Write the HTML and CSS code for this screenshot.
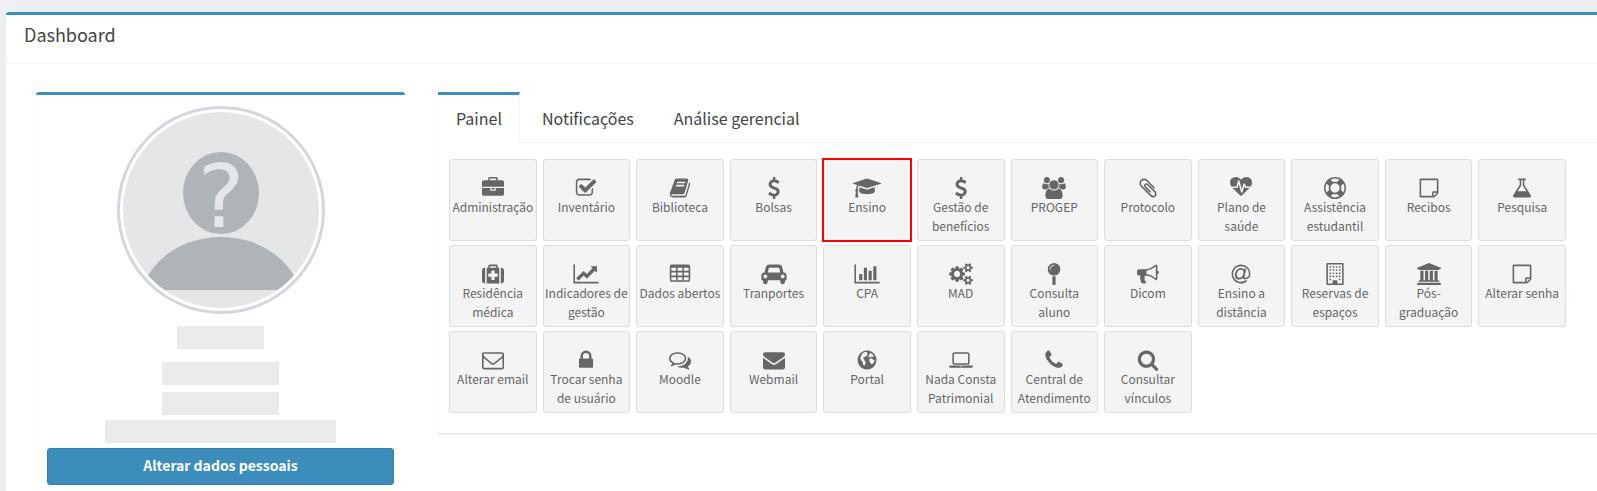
FILE: index.html
```html
<!DOCTYPE html>
<html lang="pt-BR">
<head>
    <meta charset="UTF-8">
    <meta name="viewport" content="width=device-width, initial-scale=1.0">
    <title>Dashboard</title>
    <link rel="stylesheet" href="styles.css">
</head>
<body>
    <!-- Ícones -->
    <svg class="sprite" aria-hidden="true">
        <symbol id="briefcase" viewBox="0 0 1792 1792"><path d="M640 256h512v-128h-512v128zm1152 640v480q0 66-47 113t-113 47h-1472q-66 0-113-47t-47-113v-480h672v160q0 26 19 45t45 19h320q26 0 45-19t19-45v-160h672zm-768 0v128h-256v-128h256zm768-480v384h-1792v-384q0-66 47-113t113-47h352v-160q0-40 28-68t68-28h576q40 0 68 28t28 68v160h352q66 0 113 47t47 113z"/></symbol>
        <symbol id="check" viewBox="0 0 1792 1792"><path d="M1472 930v318q0 119-84.500 203.500t-203.500 84.500h-832q-119 0-203.500-84.500t-84.500-203.500v-832q0-119 84.500-203.500t203.500-84.500h832q63 0 117 25 15 7 18 23 3 17-9 29l-49 49q-10 10-23 10-3 0-9-2-23-6-45-6h-832q-66 0-113 47t-47 113v832q0 66 47 113t113 47h832q66 0 113-47t47-113v-254q0-13 9-22l64-64q10-10 23-10 6 0 12 3 20 8 20 29zm231-489l-814 814q-24 24-57 24t-57-24l-430-430q-24-24-24-57t24-57l110-110q24-24 57-24t57 24l263 263 647-647q24-24 57-24t57 24l110 110q24 24 24 57t-24 57z"/></symbol>
        <symbol id="book" viewBox="0 0 1792 1792"><path d="M1703 478q40 57 18 129l-275 906q-19 64-76.500 107.500t-122.500 43.500h-923q-77 0-148.500-53.500t-99.500-131.500q-24-67-2-127 0-4 3-27t4-37q1-8-3-21.500t-3-19.500q2-11 8-21t16.500-23.500 16.500-23.500q23-38 45-91.500t30-91.500q3-10 .5-30t-.5-28q3-11 17-28t17-23q21-36 42-92t25-90q1-9-2.500-32t.5-28q4-13 22-30.500t22-22.500q19-26 42.500-84.500t27.500-96.500q1-8-3-25.500t-2-26.500q2-8 9-18t18-23 17-21q8-12 16.500-30.500t15-35 16-36 19.500-32 26.500-23.500 36-11.500 47.500 5.500l-1 3q38-9 51-9h761q74 0 114 56t18 130l-274 906q-36 119-71.500 153.500t-128.500 34.500h-869q-27 0-38 15-11 16-1 43 24 70 144 70h923q29 0 56-15.500t35-41.500l300-987q7-22 5-57 38 15 59 43zm-1064 2q-4 13 2 22.500t20 9.500h608q13 0 25.500-9.500t16.500-22.500l21-64q4-13-2-22.500t-20-9.500h-608q-13 0-25.500 9.500t-16.500 22.500zm-83 256q-4 13 2 22.500t20 9.500h608q13 0 25.500-9.500t16.500-22.500l21-64q4-13-2-22.500t-20-9.500h-608q-13 0-25.500 9.500t-16.500 22.500z"/></symbol>
        <symbol id="dollar" viewBox="0 0 1792 1792"><path d="M1362 1185q0 153-99.500 263.500t-258.500 136.500v175q0 14-9 23t-23 9h-135q-13 0-22.500-9.500t-9.500-22.500v-175q-66-9-127.500-31t-101.500-44.500-74-48-46.500-37.500-17.500-18q-17-21-2-41l103-135q7-10 23-12 15-2 24 9l2 2q113 99 243 125 37 8 74 8 81 0 142.500-43t61.500-122q0-28-15-53t-33.500-42-58.500-37.500-66-32-80-32.500q-39-16-61.500-25t-61.500-26.500-62.500-31-56.500-35.500-53.500-42.500-43.500-49-35.500-58-21-66.500-8.500-78q0-138 98-242t255-134v-180q0-13 9.500-22.500t22.500-9.500h135q14 0 23 9t9 23v176q57 6 110.500 23t87 33.500 63.500 37.500 39 29 15 14q17 18 5 38l-81 146q-8 15-23 16-14 3-27-7-3-3-14.500-12t-39-26.500-58.500-32-74.500-26-85.500-11.500q-95 0-155 43t-60 111q0 26 8.500 48t29.500 41.500 39.500 33 56 31 60.500 27 70 27.500q53 20 81 31.500t76 35 75.500 42.500 62 50 53 63.500 31.500 76.500 13 94z"/></symbol>
        <symbol id="graduation" viewBox="0 0 2304 1792"><path d="M1774 836l18 316q4 69-82 128t-235 93.500-323 34.500-323-34.500-235-93.500-82-128l18-316 574 181q22 7 48 7t48-7zm530-324q0 23-22 31l-1120 352q-4 1-10 1t-10-1l-652-206q-43 34-71 111.500t-34 178.500q63 36 63 109 0 69-58 107l58 433q2 14-8 25-9 11-24 11h-192q-15 0-24-11-10-11-8-25l58-433q-58-38-58-107 0-73 65-111 11-207 98-330l-333-104q-22-8-22-31t22-31l1120-352q4-1 10-1t10 1l1120 352q22 8 22 31z"/></symbol>
        <symbol id="users" viewBox="0 0 1920 1792"><path d="M593 896q-162 5-265 128h-134q-82 0-138-40.500t-56-118.500q0-353 124-353 6 0 43.500 21t97.500 42.500 119 21.500q67 0 133-23-5 37-5 66 0 139 81 256zm1071 637q0 120-73 189.500t-194 69.500h-874q-121 0-194-69.500t-73-189.500q0-53 3.500-103.500t14-109 26.500-108.500 43-97.500 62-81 85.500-53.500 111.500-20q10 0 43 21.500t73 48 107 48 135 21.500 135-21.500 107-48 73-48 43-21.500q61 0 111.500 20t85.500 53.500 62 81 43 97.500 26.500 108.500 14 109 3.500 103.500zm-1024-1277q0 106-75 181t-181 75-181-75-75-181 75-181 181-75 181 75 75 181zm704 384q0 159-112.500 271.500t-271.500 112.500-271.500-112.500-112.500-271.500 112.500-271.500 271.500-112.500 271.500 112.500 112.500 271.500zm576 225q0 78-56 118.500t-138 40.500h-134q-103-123-265-128 81-117 81-256 0-29-5-66 66 23 133 23 59 0 119-21.500t97.500-42.500 43.500-21q124 0 124 353zm-128-609q0 106-75 181t-181 75-181-75-75-181 75-181 181-75 181 75 75 181z"/></symbol>
        <symbol id="paperclip" viewBox="0 0 1792 1792"><path d="M1596 1385q0 117-79 196t-196 79q-135 0-235-100l-777-776q-113-115-113-271 0-159 110-270t269-111q158 0 273 113l605 606q10 10 10 22 0 16-30.500 46.500t-46.500 30.500q-13 0-23-10l-606-607q-79-77-181-77-106 0-179 75t-73 181q0 105 76 181l776 777q63 63 145 63 64 0 106-42t42-106q0-82-63-145l-581-581q-26-24-60-24-29 0-48 19t-19 48q0 32 25 59l410 410q10 10 10 22 0 16-31 47t-47 31q-12 0-22-10l-410-410q-63-61-63-149 0-82 57-139t139-57q88 0 149 63l581 581q100 98 100 235z"/></symbol>
        <symbol id="heartbeat" viewBox="0 0 1792 1792"><path d="M1280 896h305q-5 6-10 10.500t-9 7.500l-3 4-623 600q-18 18-44 18t-44-18l-624-602q-5-2-21-20h369q22 0 39.500-13.500t22.500-34.500l70-281 190 667q6 20 23 33t39 13q21 0 38-13t23-33l146-485 56 112q18 35 57 35zm512-428q0 145-103 300h-369l-111-221q-8-17-25.500-27t-36.500-8q-45 5-56 46l-129 430-196-686q-6-20-23.500-33t-39.500-13-39 13.500-22 34.500l-116 464h-423q-103-155-103-300 0-220 127-344t351-124q62 0 126.500 21.500t120 58 95.500 68.500 76 68q36-36 76-68t95.500-68.500 120-58 126.500-21.500q224 0 351 124t127 344z"/></symbol>
        <symbol id="life-ring" viewBox="0 0 1792 1792"><path fill-rule="evenodd" d="M896 0q182 0 348 71t286 191 191 286 71 348-71 348-191 286-286 191-348 71-348-71-286-191-191-286-71-348 71-348 191-286 286-191 348-71zm0 128q-190 0-361 90l194 194q82-28 167-28t167 28l194-194q-171-90-361-90zm-678 1129l194-194q-28-82-28-167t28-167l-194-194q-90 171-90 361t90 361zm678 407q190 0 361-90l-194-194q-82 28-167 28t-167-28l-194 194q171 90 361 90zm0-384q159 0 271.500-112.500t112.500-271.500-112.500-271.500-271.500-112.500-271.500 112.500-112.500 271.500 112.500 271.500 271.500 112.500zm484-217l194 194q90-171 90-361t-90-361l-194 194q28 82 28 167t-28 167z"/></symbol>
        <symbol id="sticky-note" viewBox="0 0 1536 1792"><path d="M1400 1280h-248v248q29-10 41-22l185-185q12-12 22-41zm-280-128h288v-896h-1280v1280h896v-288q0-40 28-68t68-28zm416-928v1024q0 40-20 88t-48 76l-184 184q-28 28-76 48t-88 20h-1024q-40 0-68-28t-28-68v-1344q0-40 28-68t68-28h1344q40 0 68 28t28 68z"/></symbol>
        <symbol id="flask" viewBox="0 0 1792 1792"><path d="M1591 1448q56 89 21.500 152.500t-140.500 63.500h-1152q-106 0-140.500-63.500t21.500-152.500l503-793v-399h-64q-26 0-45-19t-19-45 19-45 45-19h512q26 0 45 19t19 45-19 45-45 19h-64v399zm-779-725l-272 429h712l-272-429-20-31v-436h-128v436z"/></symbol>
        <symbol id="medkit" viewBox="0 0 1792 1792"><path d="M1280 1088v-192q0-14-9-23t-23-9h-224v-224q0-14-9-23t-23-9h-192q-14 0-23 9t-9 23v224h-224q-14 0-23 9t-9 23v192q0 14 9 23t23 9h224v224q0 14 9 23t23 9h192q14 0 23-9t9-23v-224h224q14 0 23-9t9-23zm-640-704h512v-128h-512v128zm-384 0v1280h-32q-92 0-158-66t-66-158v-832q0-92 66-158t158-66h32zm1152 0v1280h-1024v-1280h128v-160q0-40 28-68t68-28h576q40 0 68 28t28 68v160h128zm384 224v832q0 92-66 158t-158 66h-32v-1280h32q92 0 158 66t66 158z"/></symbol>
        <symbol id="line-chart" viewBox="0 0 2048 1792"><path d="M2048 1536v128h-2048v-1536h128v1408h1920zm-128-1248v435q0 21-19.500 29.500t-35.500-7.500l-121-121-633 633q-10 10-23 10t-23-10l-233-233-416 416-192-192 585-585q10-10 23-10t23 10l233 233 464-464-121-121q-16-16-7.500-35.500t29.500-19.500h435q14 0 23 9t9 23z"/></symbol>
        <symbol id="table" viewBox="0 0 1664 1792"><path fill-rule="evenodd" d="M1664 288v1088q0 66-47 113t-113 47h-1344q-66 0-113-47t-47-113v-1088q0-66 47-113t113-47h1344q66 0 113 47t47 113zM128 384v256h384v-256zm512 0v256h384v-256zm512 0v256h384v-256zM128 768v256h384v-256zm512 0v256h384v-256zm512 0v256h384v-256zM128 1152v256h384v-256zm512 0v256h384v-256zm512 0v256h384v-256z"/></symbol>
        <symbol id="car" viewBox="0 0 2048 1792"><path d="M480 1088q0-66-47-113t-113-47-113 47-47 113 47 113 113 47 113-47 47-113zm36-320h1016l-89-357q-2-8-14-17.500t-21-9.500h-768q-9 0-21 9.500t-14 17.500zm1372 320q0-66-47-113t-113-47-113 47-47 113 47 113 113 47 113-47 47-113zm160-96v384q0 14-9 23t-23 9h-96v128q0 80-56 136t-136 56-136-56-56-136v-128h-1024v128q0 80-56 136t-136 56-136-56-56-136v-128h-96q-14 0-23-9t-9-23v-384q0-93 65.500-158.500t158.500-65.500h28l105-419q23-94 104-157.500t179-63.500h768q98 0 179 63.500t104 157.500l105 419h28q93 0 158.500 65.500t65.500 158.500z"/></symbol>
        <symbol id="bar-chart" viewBox="0 0 2048 1792"><path d="M640 896v512h-256v-512h256zm384-512v1024h-256v-1024h256zm1024 1152v128h-2048v-1536h128v1408h1920zm-640-896v768h-256v-768h256zm384-384v1152h-256v-1152h256z"/></symbol>
        <symbol id="cogs" viewBox="0 0 1920 1792"><path d="M896 896q0-106-75-181t-181-75-181 75-75 181 75 181 181 75 181-75 75-181zm768 512q0-52-38-90t-90-38-90 38-38 90q0 53 37.500 90.500t90.500 37.500 90.500-37.500 37.500-90.500zm0-1024q0-52-38-90t-90-38-90 38-38 90q0 53 37.500 90.500t90.500 37.500 90.500-37.500 37.500-90.500zm-384 421v185q0 10-7 19.500t-16 10.500l-155 24q-11 35-32 76 34 48 90 115 7 11 7 20 0 12-7 19-23 30-82.500 89.500t-78.500 59.500q-11 0-21-7l-115-90q-37 19-77 31-11 108-23 155-7 24-30 24h-186q-11 0-20-7.500t-10-17.500l-23-153q-34-10-75-31l-118 89q-7 7-20 7-11 0-21-8-144-133-144-160 0-9 7-19 10-14 41-53t47-61q-23-44-35-82l-152-24q-10-1-17-9.500t-7-19.500v-185q0-10 7-19.500t16-10.500l155-24q11-35 32-76-34-48-90-115-7-11-7-20 0-12 7-20 22-30 82-89t79-59q11 0 21 7l115 90q34-18 77-32 11-108 23-154 7-24 30-24h186q11 0 20 7.500t10 17.500l23 153q34 10 75 31l118-89q8-7 20-7 11 0 21 8 144 133 144 160 0 8-7 19-12 16-42 54t-45 60q23 48 34 82l152 23q10 2 17 10.500t7 19.500zm640 533v140q0 16-149 31-12 27-30 52 51 113 51 138 0 4-4 7-122 71-124 71-8 0-46-47t-52-68q-20 2-30 2t-30-2q-14 21-52 68t-46 47q-2 0-124-71-4-3-4-7 0-25 51-138-18-25-30-52-149-15-149-31v-140q0-16 149-31 13-29 30-52-51-113-51-138 0-4 4-7 4-2 35-20t59-34 30-16q8 0 46 46.500t52 67.500q20-2 30-2t30 2q51-71 92-112l6-2q4 0 124 70 4 3 4 7 0 25-51 138 17 23 30 52 149 15 149 31zm0-1024v140q0 16-149 31-12 27-30 52 51 113 51 138 0 4-4 7-122 71-124 71-8 0-46-47t-52-68q-20 2-30 2t-30-2q-14 21-52 68t-46 47q-2 0-124-71-4-3-4-7 0-25 51-138-18-25-30-52-149-15-149-31v-140q0-16 149-31 13-29 30-52-51-113-51-138 0-4 4-7 4-2 35-20t59-34 30-16q8 0 46 46.500t52 67.500q20-2 30-2t30 2q51-71 92-112l6-2q4 0 124 70 4 3 4 7 0 25-51 138 17 23 30 52 149 15 149 31z"/></symbol>
        <symbol id="map-pin" viewBox="0 0 1024 1792"><path d="M512 1088q66 0 128-15v655q0 26-19 45t-45 19h-128q-26 0-45-19t-19-45v-655q62 15 128 15zm0-1088q212 0 362 150t150 362-150 362-362 150-362-150-150-362 150-362 362-150zm0 224q14 0 23-9t9-23-9-23-23-9q-146 0-249 103t-103 249q0 14 9 23t23 9 23-9 9-23q0-119 84.500-203.500t203.500-84.500z"/></symbol>
        <symbol id="bullhorn" viewBox="0 0 1792 1792"><path d="M1664 640q53 0 90.500 37.500t37.500 90.500-37.500 90.500-90.500 37.500v384q0 52-38 90t-90 38q-417-347-812-380-58 19-91 66t-31 100.500 40 92.500q-20 33-23 65.500t6 58 33.500 55 48 50 61.500 50.500q-29 58-111.500 83t-168.500 11.500-132-55.500q-7-23-29.500-87.500t-32-94.500-23-89-15-101 3.500-98.500 22-110.500h-122q-66 0-113-47t-47-113v-192q0-66 47-113t113-47h480q435 0 896-384 52 0 90 38t38 90v384zm-128 604v-954q-394 302-768 343v270q377 42 768 341z"/></symbol>
        <symbol id="at" viewBox="0 0 1536 1792"><path d="M972 775q0-108-53.500-169t-147.500-61q-63 0-124 30.500t-110 84.500-79.500 137-30.500 180q0 112 53.500 173t150.500 61q96 0 176-66.500t122.500-166 42.500-203.500zm564 121q0 111-37 197t-98.500 135-131.500 74.500-145 27.500q-6 0-15.500.5t-16.500.5q-95 0-142-53-28-33-33-83-52 66-131.500 110t-173.500 44q-161 0-249.500-95.500t-88.500-269.500q0-157 66-290t179-210.500 246-77.500q87 0 155 35.500t106 99.500l2-19 11-56q1-6 5.500-12t9.500-6h118q5 0 13 11 5 5 3 16l-120 614q-5 24-5 48 0 39 12.500 52t44.500 13q28-1 57-5.500t73-24 77-50 57-89.500 24-137q0-292-174-466t-466-174q-130 0-248.500 51t-204 136.500-136.500 204-51 248.500 51 248.500 136.500 204 204 136.500 248.500 51q228 0 405-144 11-9 24-8t21 12l41 49q8 12 7 24-2 13-12 22-102 83-227.500 128t-258.500 45q-156 0-298-61t-245-164-164-245-61-298 61-298 164-245 245-164 298-61q344 0 556 212t212 556z"/></symbol>
        <symbol id="building" viewBox="0 0 1408 1792"><path fill-rule="evenodd" d="M64 0h1280q64 0 64 64v1664q0 64-64 64h-1280q-64 0-64-64v-1664q0-64 64-64zM128 128v1536h384v-224q0-32 32-32h320q32 0 32 32v224h384v-1536z"/><path d="M256 256h128v128h-128zm256 0h128v128h-128zm256 0h128v128h-128zm256 0h128v128h-128zM256 512h128v128h-128zm256 0h128v128h-128zm256 0h128v128h-128zm256 0h128v128h-128zM256 768h128v128h-128zm256 0h128v128h-128zm256 0h128v128h-128zm256 0h128v128h-128zM256 1024h128v128h-128zm256 0h128v128h-128zm256 0h128v128h-128zm256 0h128v128h-128zM256 1280h128v128h-128zm768 0h128v128h-128z"/></symbol>
        <symbol id="university" viewBox="0 0 1920 1792"><path d="M960 0l960 384v128h-128q0 26-20.500 45t-48.500 19h-1526q-28 0-48.500-19t-20.500-45h-128v-128zm-704 640h256v768h128v-768h256v768h128v-768h256v768h128v-768h256v768h59q28 0 48.500 19t20.500 45v64h-1664v-64q0-26 20.500-45t48.500-19h59v-768zm1595 960q28 0 48.500 19t20.500 45v128h-1920v-128q0-26 20.500-45t48.500-19h1782z"/></symbol>
        <symbol id="envelope-o" viewBox="0 0 1792 1792"><path d="M1664 1504v-768q-32 36-69 66-268 206-426 338-51 43-83 67t-86.500 48.500-102.500 24.500h-2q-48 0-102.500-24.500t-86.500-48.500-83-67q-158-132-426-338-37-30-69-66v768q0 13 9.500 22.500t22.500 9.500h1472q13 0 22.500-9.500t9.500-22.500zm0-1051v-24.500l-.5-13-3-12.500-5.500-9-9-7.500-14-2.500h-1472q-13 0-22.500 9.500t-9.500 22.500q0 168 147 284 193 152 401 317 6 5 35 29.500t46 37.500 44.500 31.500 50.500 27.500 43 9h2q20 0 43-9t50.500-27.500 44.500-31.500 46-37.500 35-29.500q208-165 401-317 54-43 100.500-115.500t46.500-131.500zm128-37v1088q0 66-47 113t-113 47h-1472q-66 0-113-47t-47-113v-1088q0-66 47-113t113-47h1472q66 0 113 47t47 113z"/></symbol>
        <symbol id="lock" viewBox="0 0 1152 1792"><path d="M320 768h512v-192q0-106-75-181t-181-75-181 75-75 181v192zm832 96v576q0 40-28 68t-68 28h-960q-40 0-68-28t-28-68v-576q0-40 28-68t68-28h32v-192q0-184 132-316t316-132 316 132 132 316v192h32q40 0 68 28t28 68z"/></symbol>
        <symbol id="comments" viewBox="0 0 1792 1792"><path d="M704 384q-153 0-286 52t-211.500 141-78.500 191q0 82 53 158t149 132l97 56-35 84q34-20 62-39l44-31 53 10q78 14 153 14 153 0 286-52t211.500-141 78.500-191-78.500-191-211.500-141-286-52zm0-128q191 0 353.500 68.500t256.500 186.500 94 257-94 257-256.500 186.500-353.500 68.500q-86 0-176-16-124 88-278 128-36 9-86 16h-3q-11 0-20.500-8t-11.500-21q-1-3-1-6.500t.5-6.500 2-6l2.500-5 3.500-5.500 4-5 4.500-5 4-4.500q5-6 23-25t26-29.500 22.500-29 25-38.500 20.500-44q-124-72-195-177t-71-224q0-139 94-257t256.500-186.500 353.500-68.500zm822 1169q10 24 20.500 44t25 38.500 22.500 29 26 29.500 23 25q1 1 4 4.500t4.500 5 4 5 3.500 5.500l2.500 5 2 6 .5 6.500-1 6.500q-3 14-13 22t-22 7q-50-7-86-16-154-40-278-128-90 16-176 16-271 0-472-132 58 4 88 4 161 0 309-45t264-129q125-92 192-212t67-254q0-77-23-152 129 71 204 178t75 230q0 120-71 224.500t-195 176.500z"/></symbol>
        <symbol id="envelope" viewBox="0 0 1792 1792"><path d="M1792 710v794q0 66-47 113t-113 47h-1472q-66 0-113-47t-47-113v-794q44 49 101 87 362 246 497 345 57 42 92.500 65.500t94.500 48 110 24.500h2q51 0 110-24.500t94.500-48 92.500-65.500q170-123 498-345 57-39 100-87zm0-294q0 79-49 151t-122 123q-376 261-468 325-10 7-42.500 31t-54 38.500-52 32.500-57.500 27-50 9h-2q-23 0-50-9t-57.500-27-52-32.500-54-38.500-42.500-31q-91-64-262-182.500t-205-142.500q-62-42-117-115.500t-55-136.500q0-78 41.500-130t118.500-52h1472q65 0 112.500 47t47.500 113z"/></symbol>
        <symbol id="globe" viewBox="0 0 1536 1792"><path fill-rule="evenodd" d="M768 128a768 768 0 1 0 .1 0zM560 270l150-50 90 60-40 90 90 50-70 110-120 30-90 120-90 10-20 90 90 70 20 120 90 60-30 190-80 150-110-130-20-180-140-140-50-160 60-230 120-180zM1010 300l210 130 110 190-70 50-60-60-90 60-110-40-80 60-60-80 90-60-20-100 90-40zM960 800l110-50 130 50 90 90 90-20-30 180-120 180-120 20-60-130-80-100z"/></symbol>
        <symbol id="laptop" viewBox="0 0 1920 1792"><path d="M416 1280q-66 0-113-47t-47-113v-704q0-66 47-113t113-47h1088q66 0 113 47t47 113v704q0 66-47 113t-113 47h-1088zm-32-864v704q0 13 9.500 22.500t22.500 9.500h1088q13 0 22.500-9.500t9.500-22.500v-704q0-13-9.500-22.500t-22.500-9.500h-1088q-13 0-22.500 9.500t-9.500 22.500zm1376 928h160v96q0 40-47 68t-113 28h-1600q-66 0-113-28t-47-68v-96h1760zm-720 96q16 0 16-16t-16-16h-160q-16 0-16 16t16 16h160z"/></symbol>
        <symbol id="phone" viewBox="0 0 1408 1792"><path d="M1408 1240q0 27-10 70.500t-21 68.500q-21 50-122 106-94 51-186 51-27 0-52.500-3.500t-57.500-12.500-47.500-14.500-55.500-20.500-49-18q-98-35-175-83-128-79-264.500-215.500t-215.500-264.500q-48-77-83-175-3-9-18-49t-20.500-55.500-14.500-47.500-12.500-57.500-3.500-52.500q0-92 51-186 56-101 106-122 25-11 68.500-21t70.500-10q14 0 21 3 18 6 53 76 11 19 30 54t35 63.500 31 53.500q3 4 17.500 25t21.500 35.500 7 28.500q0 20-28.500 50t-62 55-62 53-28.500 46q0 9 5 22.500t8.500 20.500 14 24 11.500 19q76 137 174 235t235 174q2 1 19 11.500t24 14 20.500 8.500 22.500 5q18 0 46-28.500t53-62 55-62 50-28.500q14 0 28.500 7t35.500 21.500 25 17.500q25 15 53.500 31t63.500 35 54 30q70 35 76 53 3 7 3 21z"/></symbol>
        <symbol id="search" viewBox="0 0 1664 1792"><path d="M1152 832q0-185-131.500-316.500t-316.500-131.500-316.500 131.500-131.500 316.500 131.500 316.500 316.500 131.500 316.500-131.500 131.500-316.500zm512 832q0 52-38 90t-90 38q-54 0-90-38l-343-342q-179 124-399 124-143 0-273.500-55.500t-225-150-150-225-55.500-273.500 55.500-273.500 150-225 225-150 273.500-55.500 273.500 55.500 225 150 150 225 55.500 273.500q0 220-124 399l343 343q37 37 37 90z"/></symbol>
    </svg>

    <main class="box">
        <div class="box-header">
            <h1>Dashboard</h1>
        </div>
        <div class="box-body">
            <!-- Perfil -->
            <section class="profile">
                <svg class="avatar" viewBox="0 0 196 196" role="img" aria-label="Foto do perfil">
                    <rect width="196" height="196" fill="#e4e6e8"/>
                    <ellipse cx="98" cy="81" rx="38" ry="41" fill="#aeb4b8"/>
                    <path d="M19 178A81 68 0 0 1 177 178z" fill="#aeb4b8"/>
                    <text x="98" y="115" text-anchor="middle">?</text>
                </svg>
                <div class="redacted name"></div>
                <div class="redacted login"></div>
                <div class="redacted"></div>
                <div class="redacted role"></div>
                <button type="button" class="btn-primary">Alterar dados pessoais</button>
            </section>

            <!-- Abas -->
            <section class="panel">
                <nav class="tabs">
                    <a href="#painel" class="tab active">Painel</a>
                    <a href="#notificacoes" class="tab">Notificações</a>
                    <a href="#analise" class="tab">Análise gerencial</a>
                </nav>
                <div class="apps" id="painel">
                    <a href="#" class="btn-app"><svg class="icon"><use href="#briefcase"/></svg>Administração</a>
                    <a href="#" class="btn-app"><svg class="icon"><use href="#check"/></svg>Inventário</a>
                    <a href="#" class="btn-app"><svg class="icon"><use href="#book"/></svg>Biblioteca</a>
                    <a href="#" class="btn-app"><svg class="icon"><use href="#dollar"/></svg>Bolsas</a>
                    <a href="#" class="btn-app highlight"><svg class="icon"><use href="#graduation"/></svg>Ensino</a>
                    <a href="#" class="btn-app"><svg class="icon"><use href="#dollar"/></svg>Gestão de<br>benefícios</a>
                    <a href="#" class="btn-app"><svg class="icon"><use href="#users"/></svg>PROGEP</a>
                    <a href="#" class="btn-app"><svg class="icon"><use href="#paperclip"/></svg>Protocolo</a>
                    <a href="#" class="btn-app"><svg class="icon"><use href="#heartbeat"/></svg>Plano de<br>saúde</a>
                    <a href="#" class="btn-app"><svg class="icon"><use href="#life-ring"/></svg>Assistência<br>estudantil</a>
                    <a href="#" class="btn-app"><svg class="icon"><use href="#sticky-note"/></svg>Recibos</a>
                    <a href="#" class="btn-app"><svg class="icon"><use href="#flask"/></svg>Pesquisa</a>

                    <a href="#" class="btn-app"><svg class="icon"><use href="#medkit"/></svg>Residência<br>médica</a>
                    <a href="#" class="btn-app"><svg class="icon"><use href="#line-chart"/></svg>Indicadores de<br>gestão</a>
                    <a href="#" class="btn-app"><svg class="icon"><use href="#table"/></svg>Dados abertos</a>
                    <a href="#" class="btn-app"><svg class="icon"><use href="#car"/></svg>Tranportes</a>
                    <a href="#" class="btn-app"><svg class="icon"><use href="#bar-chart"/></svg>CPA</a>
                    <a href="#" class="btn-app"><svg class="icon"><use href="#cogs"/></svg>MAD</a>
                    <a href="#" class="btn-app"><svg class="icon"><use href="#map-pin"/></svg>Consulta<br>aluno</a>
                    <a href="#" class="btn-app"><svg class="icon"><use href="#bullhorn"/></svg>Dicom</a>
                    <a href="#" class="btn-app"><svg class="icon"><use href="#at"/></svg>Ensino a<br>distância</a>
                    <a href="#" class="btn-app"><svg class="icon"><use href="#building"/></svg>Reservas de<br>espaços</a>
                    <a href="#" class="btn-app"><svg class="icon"><use href="#university"/></svg>Pós-<br>graduação</a>
                    <a href="#" class="btn-app"><svg class="icon"><use href="#sticky-note"/></svg>Alterar senha</a>

                    <a href="#" class="btn-app"><svg class="icon"><use href="#envelope-o"/></svg>Alterar email</a>
                    <a href="#" class="btn-app"><svg class="icon"><use href="#lock"/></svg>Trocar senha<br>de usuário</a>
                    <a href="#" class="btn-app"><svg class="icon"><use href="#comments"/></svg>Moodle</a>
                    <a href="#" class="btn-app"><svg class="icon"><use href="#envelope"/></svg>Webmail</a>
                    <a href="#" class="btn-app"><svg class="icon"><use href="#globe"/></svg>Portal</a>
                    <a href="#" class="btn-app"><svg class="icon"><use href="#laptop"/></svg>Nada Consta<br>Patrimonial</a>
                    <a href="#" class="btn-app"><svg class="icon"><use href="#phone"/></svg>Central de<br>Atendimento</a>
                    <a href="#" class="btn-app"><svg class="icon"><use href="#search"/></svg>Consultar<br>vínculos</a>
                </div>
            </section>
        </div>
    </main>
</body>
</html>
```
FILE: styles.css
```css
* {
    box-sizing: border-box;
}

body {
    margin: 0;
    padding: 12px 0 0 6px;
    background: #ecf0f5;
    color: #444;
    font-family: "Noto Sans CJK SC", "Open Sans", sans-serif;
    font-size: 14px;
    overflow-x: hidden;
}

.sprite {
    display: none;
}

/* Caixa principal */
.box {
    min-height: calc(100vh - 12px);
    background: white;
    border-top: 3px solid #3c8dbc;
    border-radius: 3px 0 0 0;
}

.box-header {
    padding: 7px 18px 17px;
    border-bottom: 1px solid #f4f4f4;
}

.box-header h1 {
    margin: 0;
    font-size: 18px;
    font-weight: normal;
    line-height: 24px;
}

.box-body {
    display: flex;
    align-items: flex-start;
    gap: 33px;
    padding: 28px 0 0 30px;
}

/* Perfil */
.profile {
    flex: 0 0 369px;
    display: flex;
    flex-direction: column;
    align-items: center;
    padding: 11px 11px 12px;
    border-top: 3px solid #3c8dbc;
    border-radius: 3px;
    box-shadow: 0 1px 1px rgba(0, 0, 0, 0.1);
}

.avatar {
    width: 208px;
    height: 208px;
    margin-bottom: 12px;
    padding: 3px;
    border: 3px solid #d2d6de;
    border-radius: 50%;
}

.avatar text {
    fill: #e4e6e8;
    font-family: "DejaVu Sans", sans-serif;
    font-size: 88px;
}

.redacted {
    width: 117px;
    height: 23px;
    margin-bottom: 5px;
    background: #ebebeb;
}

.redacted.name {
    width: 87px;
    margin-bottom: 13px;
}

.redacted.login {
    margin-bottom: 7px;
}

.redacted.role {
    width: 231px;
}

.btn-primary {
    width: 100%;
    height: 37px;
    padding: 0 0 3px;
    border: 1px solid #367fa9;
    border-radius: 3px;
    background: #3c8dbc;
    color: white;
    font-family: inherit;
    font-size: 14px;
    font-weight: bold;
    cursor: pointer;
}

/* Painel com abas */
.panel {
    flex: 1;
    min-width: 0;
    box-shadow: 0 1px 1px rgba(0, 0, 0, 0.1);
}

.tabs {
    display: flex;
    gap: 4px;
    border-bottom: 1px solid #f4f4f4;
}

.tab {
    height: 50px;
    padding: 11px 18px 0;
    border-top: 3px solid transparent;
    color: #444;
    font-size: 16px;
    line-height: 24px;
    text-decoration: none;
}

.tab.active {
    margin-bottom: -1px;
    height: 51px;
    padding-right: 17px;
    border-top-color: #3c8dbc;
    border-right: 1px solid #f4f4f4;
    background: white;
}

.apps {
    display: grid;
    grid-template-columns: repeat(12, 1fr);
    gap: 4px 6px;
    padding: 16px 31px 20px 11px;
}

.btn-app {
    height: 82px;
    padding-top: 17px;
    border: 1px solid #ddd;
    border-radius: 3px;
    background: #f4f4f4;
    color: #666;
    font-size: 12px;
    line-height: 19px;
    text-align: center;
    text-decoration: none;
    white-space: nowrap;
}

.btn-app:hover {
    background: #e7e7e7;
}

.btn-app.highlight {
    border-radius: 0;
    outline: 2px solid #f00;
    outline-offset: -1px;
}

.icon {
    display: block;
    width: 30px;
    height: 22px;
    margin: 0 auto -2px;
    fill: #666;
}
```
